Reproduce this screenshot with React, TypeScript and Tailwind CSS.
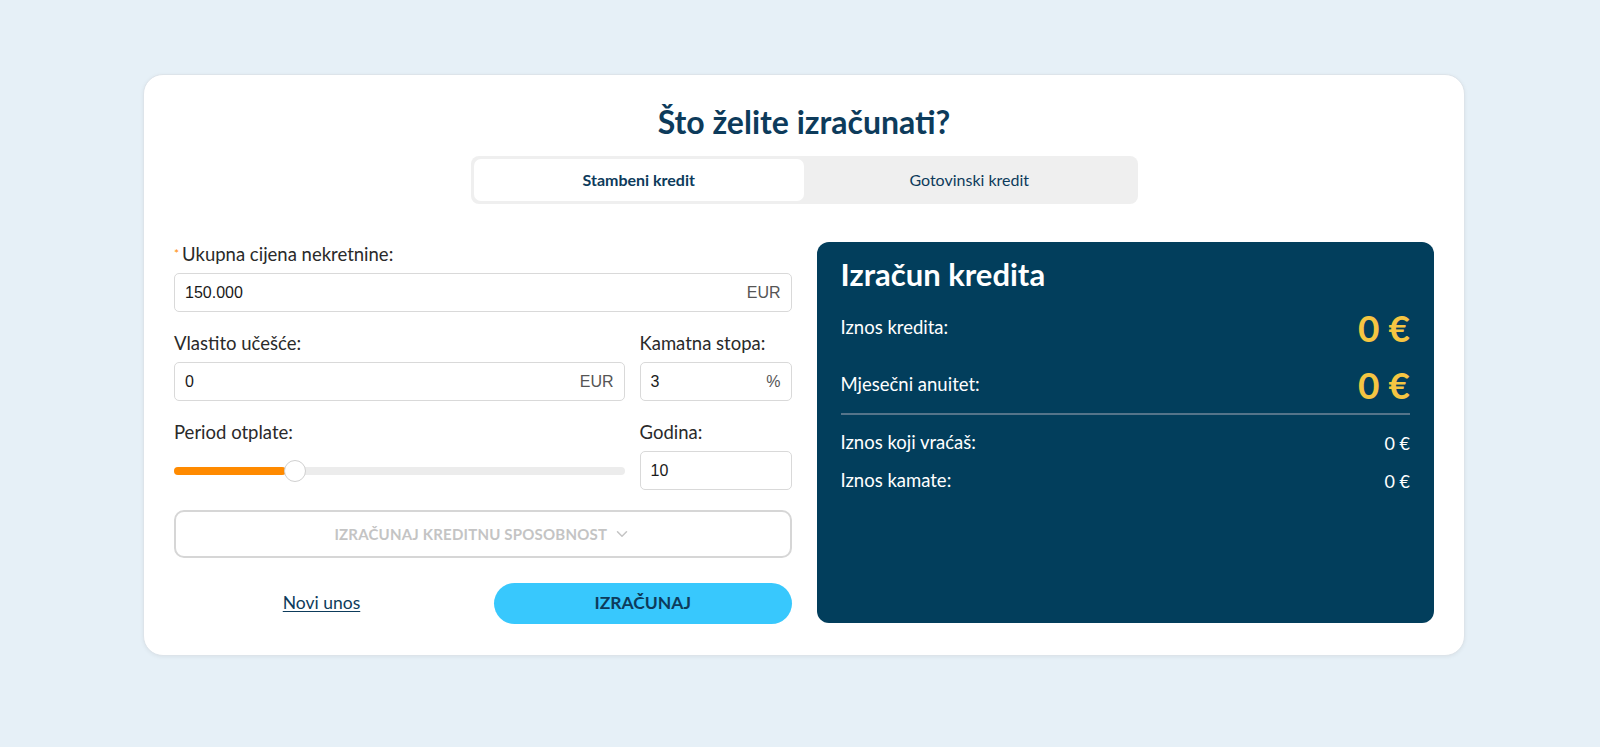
import { ChevronDown } from "lucide-react";

const font = "font-['Lato','Noto_Sans',sans-serif]";
const inputFont = "font-['Liberation_Sans',Arial,sans-serif]";

function Field({ value, unit }: { value: string; unit?: string }) {
  return (
    <div className="h-[39px] flex items-center justify-between px-[10px] border border-[#d9d9d9] rounded-[5px] bg-white">
      <span className={`${inputFont} text-[16px] text-[#1a1a1a]`}>{value}</span>
      {unit && <span className={`${inputFont} text-[16px] text-[#555]`}>{unit}</span>}
    </div>
  );
}

function Row({ label, value, big }: { label: string; value: string; big?: boolean }) {
  return (
    <div className={`flex items-center justify-between ${big ? "h-[57px]" : "h-[38px]"}`}>
      <span className="text-[18.5px] text-white">{label}</span>
      <span className={big ? "text-[37px] font-bold text-[#f5c542]" : "text-[18px] text-white"}>{value}</span>
    </div>
  );
}

export default function App() {
  return (
    <div className={`${font} min-h-[747px] bg-[#e6f0f7] pt-[74px] px-[143px]`}>
      <div className="w-[1322px] h-[582px] bg-white rounded-[20px] border border-[#dde4ea] shadow-[0_1px_4px_rgba(0,0,0,0.06)] px-[30px] pt-[25px]">
        <h1 className="text-center text-[32px] font-bold text-[#0d3b5b] leading-[44px]">
          Što želite izračunati?
        </h1>
        <div className="mx-auto mt-[12px] w-[667px] h-[48px] bg-[#efefef] rounded-[8px] p-[3px] flex">
          <div className="flex-1 bg-white rounded-[7px] flex items-center justify-center text-[16px] font-bold text-[#0d3b5b]">
            Stambeni kredit
          </div>
          <div className="flex-1 flex items-center justify-center text-[16px] text-[#0d3b5b]">
            Gotovinski kredit
          </div>
        </div>

        <div className="grid grid-cols-2 gap-[25px] mt-[38px]">
          <div className="flex flex-col">
            <div className="mt-[1px] text-[18.5px] text-[#2a2a2a] leading-[22px]">
              <span className="text-[#ff8a00] text-[12px] align-top mr-[3px]">*</span>
              Ukupna cijena nekretnine:
            </div>
            <div className="mt-[8px]">
              <Field value="150.000" unit="EUR" />
            </div>

            <div className="flex gap-[15px] mt-[20px]">
              <div className="flex-1">
                <div className="text-[18.5px] text-[#2a2a2a] leading-[22px]">Vlastito učešće:</div>
                <div className="mt-[8px]">
                  <Field value="0" unit="EUR" />
                </div>
              </div>
              <div className="w-[152px]">
                <div className="text-[18.5px] text-[#2a2a2a] leading-[22px]">Kamatna stopa:</div>
                <div className="mt-[8px]">
                  <Field value="3" unit="%" />
                </div>
              </div>
            </div>

            <div className="flex gap-[15px] mt-[20px]">
              <div className="flex-1">
                <div className="text-[18.5px] text-[#2a2a2a] leading-[22px]">Period otplate:</div>
                <div className="relative mt-[24px] h-[8px] rounded-full bg-[#ececec]">
                  <div className="h-full w-[112px] rounded-full bg-[#ff8a00]" />
                  <div className="absolute left-[110px] top-[-7px] w-[22px] h-[22px] rounded-full bg-white border border-[#d0d0d0]" />
                </div>
              </div>
              <div className="w-[152px]">
                <div className="text-[18.5px] text-[#2a2a2a] leading-[22px]">Godina:</div>
                <div className="mt-[8px]">
                  <Field value="10" />
                </div>
              </div>
            </div>

            <div className="mt-[20px] h-[48px] border-2 border-[#d6d6d6] rounded-[10px] flex items-center justify-center gap-[6px] text-[15px] font-bold text-[#c4c4c4] tracking-[0.2px]">
              IZRAČUNAJ KREDITNU SPOSOBNOST
              <ChevronDown size={18} strokeWidth={2} />
            </div>

            <div className="flex items-center gap-[25px] mt-[25px]">
              <div className="w-[295px] text-center">
                <span className="text-[17.5px] text-[#0d3b5b] underline underline-offset-2">Novi unos</span>
              </div>
              <div className="flex-1 h-[41px] rounded-full bg-[#38c8fd] flex items-center justify-center text-[17.5px] font-bold text-[#0d3b5b]">
                IZRAČUNAJ
              </div>
            </div>
          </div>

          <div className="bg-[#023e5c] rounded-[12px] px-[24px] pt-[12px] h-[381px]">
            <div className="text-[31px] font-bold text-white leading-[40px]">Izračun kredita</div>
            <div className="mt-[5px]">
              <Row label="Iznos kredita:" value="0 €" big />
              <Row label="Mjesečni anuitet:" value="0 €" big />
            </div>
            <div className="h-[2px] bg-[#55748a] mb-[9px]" />
            <Row label="Iznos koji vraćaš:" value="0 €" />
            <Row label="Iznos kamate:" value="0 €" />
          </div>
        </div>
      </div>
    </div>
  );
}
